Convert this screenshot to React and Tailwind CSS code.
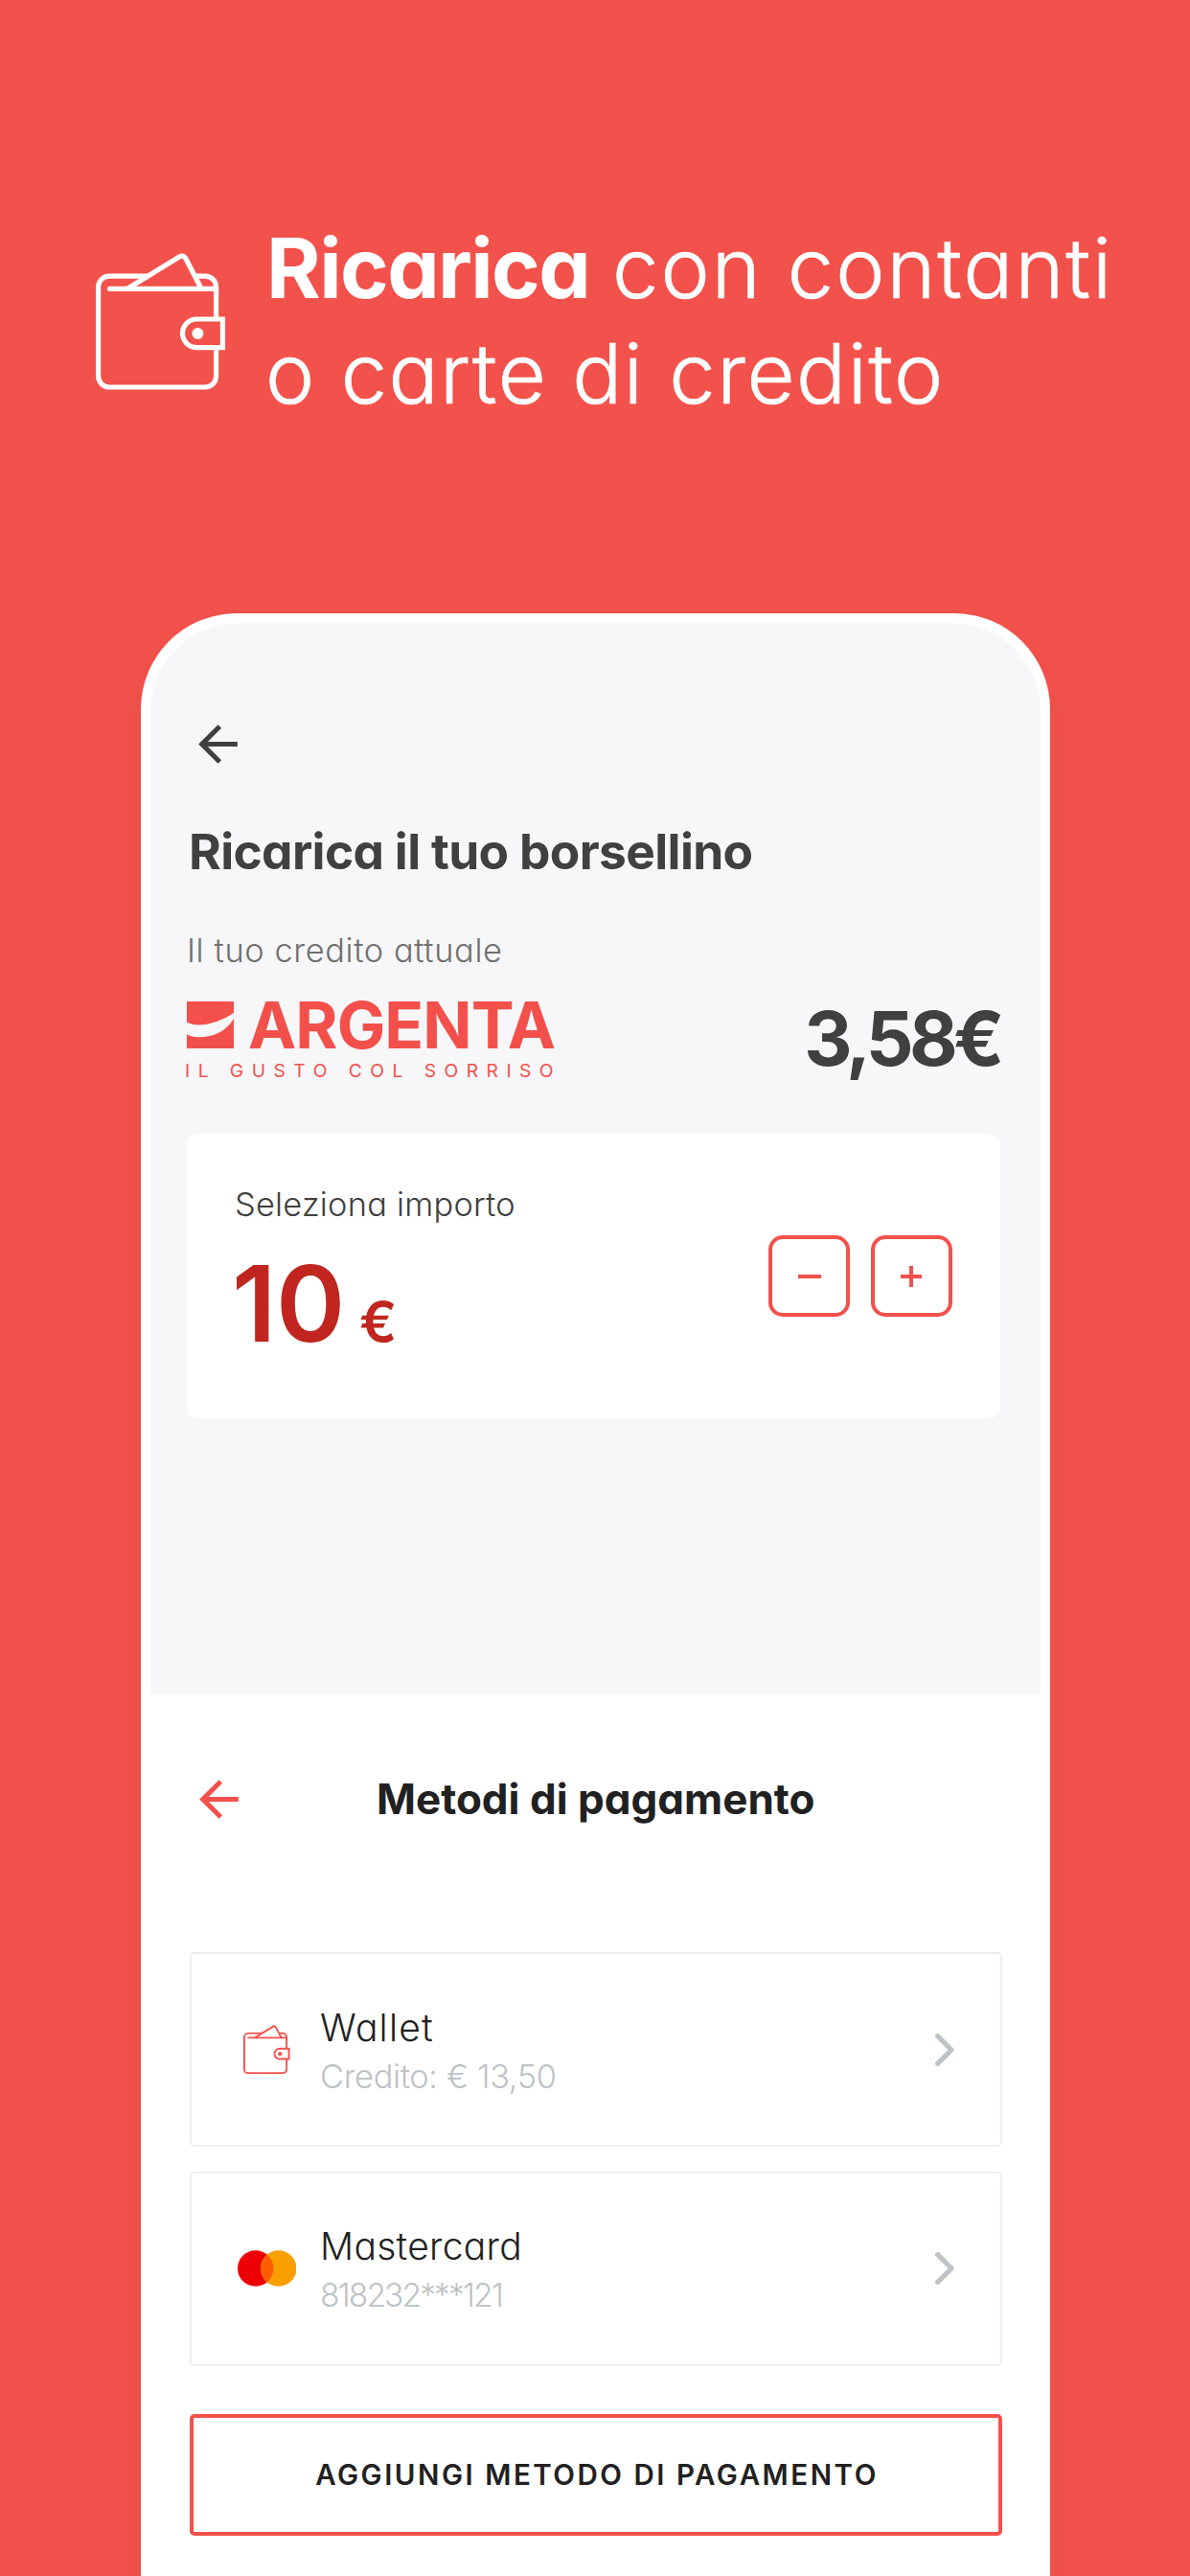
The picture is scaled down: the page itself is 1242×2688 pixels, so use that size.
import React from 'react';

function WalletIcon({ className }) {
  return (
    <svg className={className} viewBox="0 0 135 143" fill="none" stroke="currentColor" strokeWidth="5.2">
      <path d="M125.6 69V35.5a11.5 11.5 0 0 0-11.5-11.4H104M55 24.1H14a11.5 11.5 0 0 0-11.4 11.4V128.5a11.5 11.5 0 0 0 11.4 11.5H114.1a11.5 11.5 0 0 0 11.5-11.5V98.7" />
      <path d="M14.5 37.3H125.6" strokeLinecap="round" />
      <path d="M33 37.3L87.5 3.8Q91.6 1.8 94 6L110.5 38" />
      <path d="M132.4 69H105.3a14.85 14.85 0 0 0 0 29.7H132.4Z" />
      <circle cx="106.4" cy="83.9" r="6" fill="currentColor" stroke="none" />
    </svg>
  );
}

function BackArrow({ className }) {
  return (
    <svg className={className} viewBox="0 0 24 24" fill="currentColor">
      <path d="M20 11H7.83l5.59-5.59L12 4l-8 8 8 8 1.41-1.41L7.83 13H20v-2z" />
    </svg>
  );
}

function MastercardIcon() {
  return (
    <svg className="w-[61.5px] h-[38px]" viewBox="0 0 61.5 38">
      <circle cx="18.8" cy="19" r="18.8" fill="#ed0006" />
      <circle cx="42.7" cy="19" r="18.8" fill="#f9a000" />
      <path d="M30.75 4.48a18.8 18.8 0 0 1 0 29.04a18.8 18.8 0 0 1 0-29.04Z" fill="#ff5e00" />
    </svg>
  );
}

function StepButton({ plus }) {
  return (
    <button className="w-[85px] h-[85px] rounded-[15px] border-4 border-[#f3504b] flex items-center justify-center text-[#f3504b]">
      <svg className="w-6 h-6" viewBox="0 0 24 24" stroke="currentColor" strokeWidth="4">
        {plus ? <path d="M1 12H23M12 1V23" /> : <path d="M0 12H24" />}
      </svg>
    </button>
  );
}

function PaymentMethod({ icon, children }) {
  return (
    <button className="w-full h-[203px] rounded-[5px] border-[2.5px] border-[#ebf0ef] flex items-center text-left pl-[48px] pr-[48.5px]">
      <span className="w-[61.5px] flex justify-center">{icon}</span>
      <span className="ml-[25px] pt-1 flex-1 flex flex-col font-light">{children}</span>
      <svg className="w-5 h-[34px]" viewBox="0 0 20 34" fill="none" stroke="#bdc3c7" strokeWidth="5.2" strokeLinecap="round" strokeLinejoin="round">
        <path d="M2.7 2.7L17 17L2.7 31.3" />
      </svg>
    </button>
  );
}

export default function App() {
  return (
    <div className="w-[1242px] h-[2688px] overflow-hidden bg-[#f3514b] flex flex-col font-['Inter','Liberation_Sans',sans-serif] [font-feature-settings:'cv11']">
      <header className="pt-[224.5px] pl-[100px] flex text-white">
        <WalletIcon className="w-[135px] h-[143px] mt-[39.5px] shrink-0" />
        <h1 className="ml-[42px] text-[86.5px] leading-[110px] font-light whitespace-nowrap">
          <span className="flex">
            <span className="ml-px font-bold tracking-[-1.67px]">Ricarica</span>
            <span className="ml-[24px] tracking-[1.98px] [-webkit-text-stroke:0.7px_white]">con contanti</span>
          </span>
          <span className="block tracking-[1.52px] [-webkit-text-stroke:0.7px_white]">o carte di credito</span>
        </h1>
      </header>

      <main className="mt-[195.5px] ml-[146.5px] w-[949.5px] flex-1 shrink-0 rounded-t-[100px] bg-white pt-[10px] px-[10px] shadow-[0_30px_50px_rgba(0,0,0,0.05)]">
        <section className="h-[1118px] rounded-t-[92px] bg-[#f7f7f9] pt-[96px] pl-[38.5px] pr-[42.5px] text-[#404040]">
          <BackArrow className="w-[61px] h-[61px] ml-[2px]" />
          <h2 className="mt-[51px] ml-[2px] text-[51.5px] leading-[60px] font-bold tracking-[-0.66px] whitespace-nowrap">Ricarica il tuo borsellino</h2>
          <p className="mt-[54px] text-[34.4px] leading-[40px] font-light tracking-[0.6px] text-[#707070]">Il tuo credito attuale</p>

          <div className="mt-[33px] flex justify-between">
            <div className="text-[#f3504b]">
              <div className="h-[49px] flex items-center">
                <svg className="w-[49px] h-[49px]" viewBox="0 0 49 49" fill="currentColor">
                  <path d="M0 0H49V12Q30 24.5 12 24.5Q5 24.5 0 21.8Z" />
                  <path d="M0 34.3Q5 37.3 12 37.3Q37 37.3 49 18V49H0Z" />
                </svg>
                <span className="ml-[15px] text-[67.4px] leading-none font-bold tracking-[-0.96px]">ARGENTA</span>
              </div>
              <p className="mt-[13px] -ml-[2px] text-[19.3px] leading-[20px] tracking-[8.45px] whitespace-nowrap">IL GUSTO COL SORRISO</p>
            </div>
            <span className="text-[78px] leading-[78px] font-bold tracking-[-4.8px]">3,58€</span>
          </div>

          <div className="mt-[56px] h-[297px] rounded-xl bg-white pt-[54px] pb-[54px] pl-[50px] pr-[50px] flex items-center justify-between">
            <div className="self-start">
              <p className="text-[34.4px] leading-[40px] font-light tracking-[0.22px]">Seleziona importo</p>
              <p className="mt-[28px] -ml-[3px] flex items-baseline font-semibold leading-[110px] text-[#c0261f]">
                <span className="text-[109.5px] tracking-[-0.31px]">10</span>
                <span className="ml-[15px] text-[58px] leading-none">€</span>
              </p>
            </div>
            <div className="flex gap-[21.5px]">
              <StepButton />
              <StepButton plus />
            </div>
          </div>
        </section>

        <section className="pt-[79px] pl-[41px] pr-10 text-[#212121]">
          <div className="flex items-center">
            <BackArrow className="w-[61px] h-[61px] text-[#f3504b]" />
            <h3 className="ml-[134.5px] -mt-0.5 text-[44px] leading-[60px] font-bold whitespace-nowrap">Metodi di pagamento</h3>
          </div>

          <div className="mt-[129px] flex flex-col gap-[25.5px]">
            <PaymentMethod icon={<WalletIcon className="w-[48.5px] h-[51.4px] text-[#f3504b]" />}>
              <span className="text-[39px] leading-[51px] tracking-[1.2px]">Wallet</span>
              <span className="text-[34.4px] leading-[51px] tracking-[-0.37px] text-[#bdc3c7]">Credito: € 13,50</span>
            </PaymentMethod>
            <PaymentMethod icon={<MastercardIcon />}>
              <span className="text-[39px] leading-[51px] tracking-[0.29px]">Mastercard</span>
              <span className="text-[33.6px] leading-[51px] tracking-[-1.94px] text-[#bdc3c7]">818232***121</span>
            </PaymentMethod>
          </div>

          <button className="mt-[50.5px] w-full h-[127px] rounded-[5px] border-4 border-[#f3504b] pl-[2.5px] text-[29.5px] font-semibold tracking-[2.51px]">
            AGGIUNGI METODO DI PAGAMENTO
          </button>
        </section>
      </main>
    </div>
  );
}
